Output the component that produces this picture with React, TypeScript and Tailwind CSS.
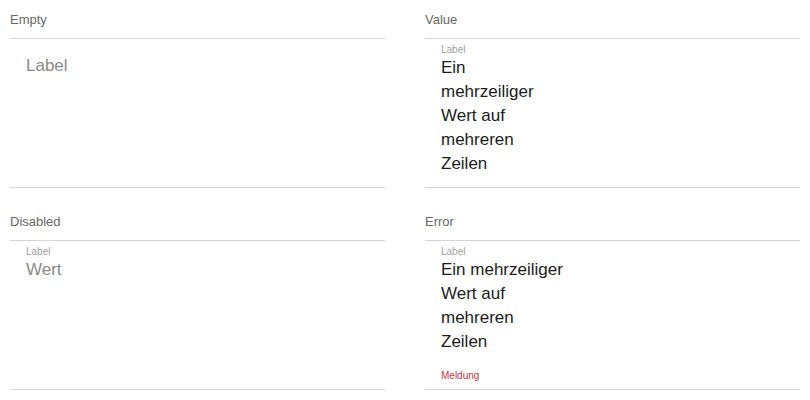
import React from "react";

const font = { fontFamily: '"Liberation Sans", Arial, sans-serif' };

function Section({ title, children }: { title: string; children: React.ReactNode }) {
  return (
    <div className="flex flex-col">
      <div className="h-[38px] pt-[12px] text-[13px] leading-4 text-[#666666]">{title}</div>
      <div className="h-[150px] border-y border-[#d4d4d4] px-4 flex flex-col">{children}</div>
    </div>
  );
}

function SmallLabel() {
  return <div className="mt-[5px] text-[10px] leading-3 text-[#a0a0a0]">Label</div>;
}

function Lines({ lines, color }: { lines: string[]; color: string }) {
  return (
    <div className={`text-[17px] leading-6 ${color}`}>
      {lines.map((l) => (
        <div key={l} className="whitespace-nowrap">
          {l}
        </div>
      ))}
    </div>
  );
}

export default function App() {
  return (
    <div style={font} className="w-[810px] h-[400px] bg-white px-[10px] grid grid-cols-2 gap-x-10 gap-y-[14px] content-start">
      <Section title="Empty">
        <div className="mt-[15px] text-[17px] leading-6 text-[#8a8a8a]">Label</div>
      </Section>
      <Section title="Value">
        <SmallLabel />
        <Lines color="text-[#1c1c1c]" lines={["Ein", "mehrzeiliger", "Wert auf", "mehreren", "Zeilen"]} />
      </Section>
      <Section title="Disabled">
        <SmallLabel />
        <Lines color="text-[#8a8a8a]" lines={["Wert"]} />
      </Section>
      <Section title="Error">
        <SmallLabel />
        <Lines color="text-[#1c1c1c]" lines={["Ein mehrzeiliger", "Wert auf", "mehreren", "Zeilen"]} />
        <div className="mt-auto mb-[7px] text-[10px] leading-3 text-[#c4354a]">Meldung</div>
      </Section>
    </div>
  );
}
